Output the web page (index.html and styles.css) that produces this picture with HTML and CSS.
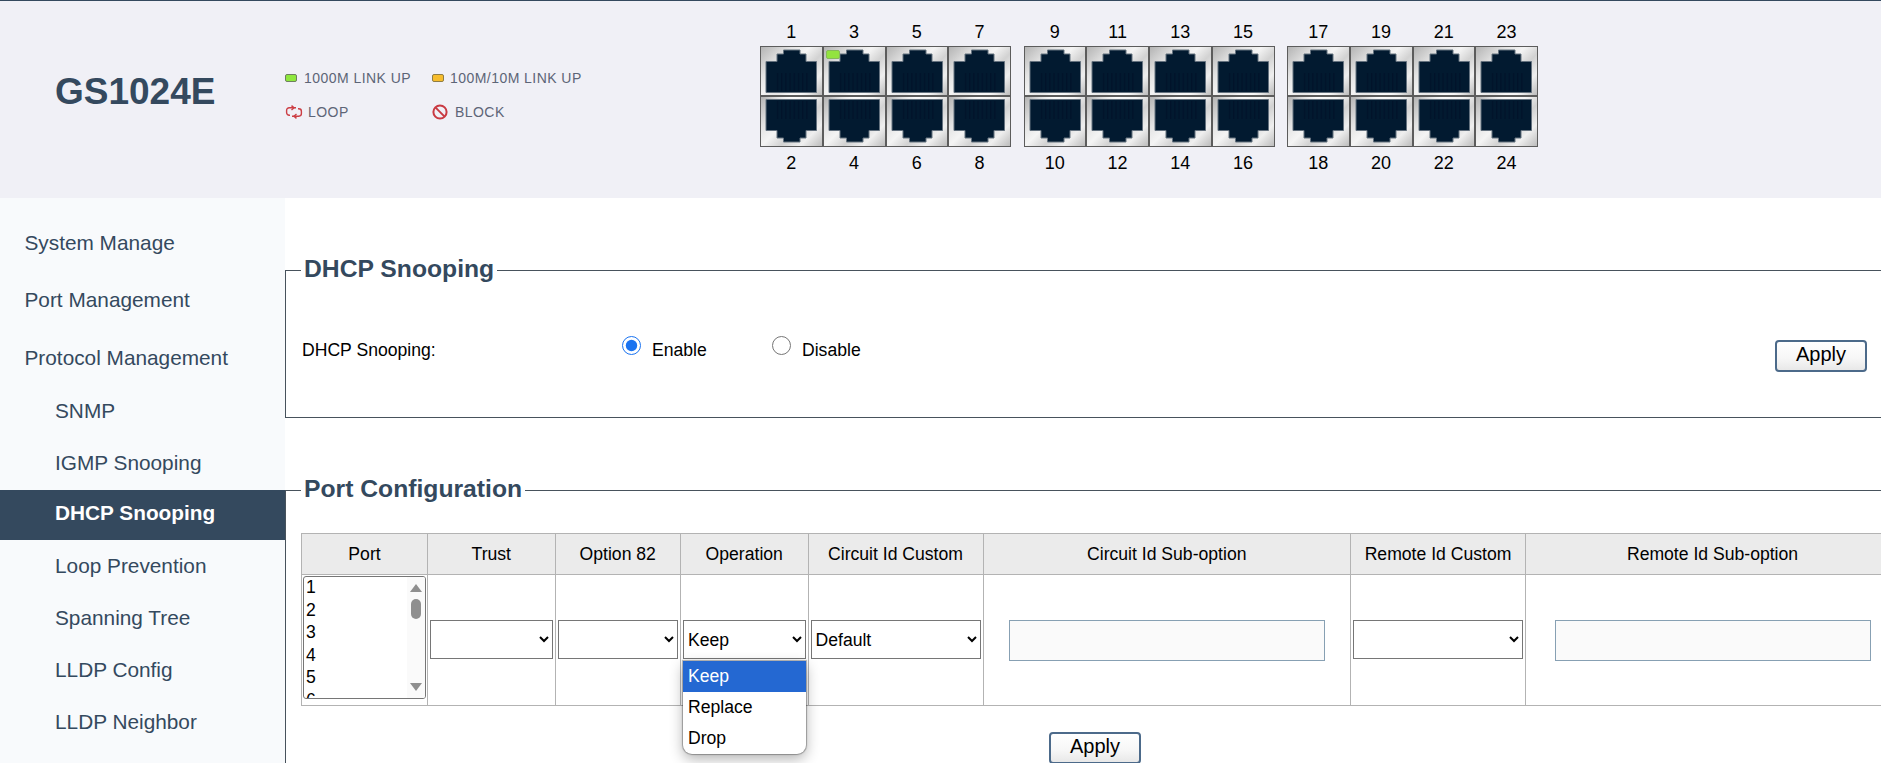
FILE: index.html
```html
<!DOCTYPE html>
<html lang="en">
<head>
    <meta charset="UTF-8">
    <meta name="viewport" content="width=device-width, initial-scale=1.0">
    <title>GS1024E - DHCP Snooping</title>
    <link rel="stylesheet" href="styles.css">
</head>
<body>
    <!-- shared port shape, flipped for the bottom row -->
    <svg class="defs" aria-hidden="true">
        <defs>
            <pattern id="pins" width="4.2" height="50" patternUnits="userSpaceOnUse">
                <rect x="0" y="0" width="1.4" height="50" fill="#01132a"/>
            </pattern>
            <symbol id="rj45" viewBox="0 0 63 50">
                <path d="M23.5 4H40V8H46V15.5H56.5V46.5H6V15.5H17V8H23.5Z" fill="#021a30" stroke="#65727f" stroke-width="1"/>
                <rect x="15" y="27" width="33" height="18" fill="url(#pins)"/>
            </symbol>
        </defs>
    </svg>

    <header class="topbar">
        <h1 class="model">GS1024E</h1>
        <div class="legend-box">
            <div class="legend-item"><span class="led led-green"></span>1000M LINK UP</div>
            <div class="legend-item legend-up"><span class="led led-amber"></span>100M/10M LINK UP</div>
            <div class="legend-item">
                <svg class="legend-icon" viewBox="0 0 18 14" fill="none" stroke="#cc3f45" stroke-width="1.4">
                    <path d="M11 2.8H4.2A2.6 2.6 0 0 0 1.6 5.4V7.6A2.6 2.6 0 0 0 4.2 10.2H5"/>
                    <path d="M7 11.2H13.8A2.6 2.6 0 0 0 16.4 8.6V6.4A2.6 2.6 0 0 0 13.8 3.8H13"/>
                    <path d="M6.5 0.6L9 2.8L6.5 5"/>
                    <path d="M11.5 9L9 11.2L11.5 13.4"/>
                </svg>LOOP
            </div>
            <div class="legend-item">
                <svg class="legend-icon icon-block" viewBox="0 0 16 16" fill="none" stroke="#c93a42" stroke-width="2">
                    <circle cx="8" cy="8" r="6.6"/>
                    <path d="M3.4 3.4L12.6 12.6"/>
                </svg>BLOCK
            </div>
        </div>

        <div class="ports">
            <div class="port-group">
                <span class="port-no">1</span><span class="port-no">3</span><span class="port-no">5</span><span class="port-no">7</span>
                <div class="port"><svg><use href="#rj45"/></svg></div>
                <div class="port"><span class="port-led"></span><svg><use href="#rj45"/></svg></div>
                <div class="port"><svg><use href="#rj45"/></svg></div>
                <div class="port"><svg><use href="#rj45"/></svg></div>
                <div class="port port-low"><svg><use href="#rj45"/></svg></div>
                <div class="port port-low"><svg><use href="#rj45"/></svg></div>
                <div class="port port-low"><svg><use href="#rj45"/></svg></div>
                <div class="port port-low"><svg><use href="#rj45"/></svg></div>
                <span class="port-no">2</span><span class="port-no">4</span><span class="port-no">6</span><span class="port-no">8</span>
            </div>
            <div class="port-group">
                <span class="port-no">9</span><span class="port-no">11</span><span class="port-no">13</span><span class="port-no">15</span>
                <div class="port"><svg><use href="#rj45"/></svg></div>
                <div class="port"><svg><use href="#rj45"/></svg></div>
                <div class="port"><svg><use href="#rj45"/></svg></div>
                <div class="port"><svg><use href="#rj45"/></svg></div>
                <div class="port port-low"><svg><use href="#rj45"/></svg></div>
                <div class="port port-low"><svg><use href="#rj45"/></svg></div>
                <div class="port port-low"><svg><use href="#rj45"/></svg></div>
                <div class="port port-low"><svg><use href="#rj45"/></svg></div>
                <span class="port-no">10</span><span class="port-no">12</span><span class="port-no">14</span><span class="port-no">16</span>
            </div>
            <div class="port-group">
                <span class="port-no">17</span><span class="port-no">19</span><span class="port-no">21</span><span class="port-no">23</span>
                <div class="port"><svg><use href="#rj45"/></svg></div>
                <div class="port"><svg><use href="#rj45"/></svg></div>
                <div class="port"><svg><use href="#rj45"/></svg></div>
                <div class="port"><svg><use href="#rj45"/></svg></div>
                <div class="port port-low"><svg><use href="#rj45"/></svg></div>
                <div class="port port-low"><svg><use href="#rj45"/></svg></div>
                <div class="port port-low"><svg><use href="#rj45"/></svg></div>
                <div class="port port-low"><svg><use href="#rj45"/></svg></div>
                <span class="port-no">18</span><span class="port-no">20</span><span class="port-no">22</span><span class="port-no">24</span>
            </div>
        </div>
    </header>

    <div class="content">
        <nav class="sidebar">
            <a class="nav-item">System Manage</a>
            <a class="nav-item">Port Management</a>
            <a class="nav-item">Protocol Management</a>
            <div class="sub-nav">
                <a class="sub-item">SNMP</a>
                <a class="sub-item">IGMP Snooping</a>
                <a class="sub-item active">DHCP Snooping</a>
                <a class="sub-item">Loop Prevention</a>
                <a class="sub-item">Spanning Tree</a>
                <a class="sub-item">LLDP Config</a>
                <a class="sub-item">LLDP Neighbor</a>
            </div>
        </nav>

        <main class="main">
            <fieldset class="panel">
                <legend>DHCP Snooping</legend>
                <div class="state-row">
                    <span class="state-label">DHCP Snooping:</span>
                    <label class="radio radio-enable"><input type="radio" name="snooping" checked>Enable</label>
                    <label class="radio"><input type="radio" name="snooping">Disable</label>
                    <button class="btn btn-state" type="button">Apply</button>
                </div>
            </fieldset>

            <fieldset class="panel panel-ports">
                <legend>Port Configuration</legend>
                <table class="port-table">
                    <thead>
                        <tr>
                            <th class="col-port">Port</th>
                            <th class="col-trust">Trust</th>
                            <th class="col-option">Option 82</th>
                            <th class="col-operation">Operation</th>
                            <th class="col-custom">Circuit Id Custom</th>
                            <th class="col-sub">Circuit Id Sub-option</th>
                            <th class="col-custom">Remote Id Custom</th>
                            <th class="col-remote">Remote Id Sub-option</th>
                        </tr>
                    </thead>
                    <tbody>
                        <tr>
                            <td class="port-cell">
                                <div class="port-list">
                                    <div>1</div><div>2</div><div>3</div><div>4</div><div>5</div><div>6</div>
                                    <div class="list-bar">
                                        <span class="arrow-up"></span>
                                        <span class="list-thumb"></span>
                                        <span class="arrow-down"></span>
                                    </div>
                                </div>
                            </td>
                            <td><select><option></option></select></td>
                            <td><select><option></option></select></td>
                            <td>
                                <div class="select-wrap">
                                    <select><option>Keep</option></select>
                                    <ul class="dropdown">
                                        <li class="selected">Keep</li>
                                        <li>Replace</li>
                                        <li>Drop</li>
                                    </ul>
                                </div>
                            </td>
                            <td><select><option>Default</option></select></td>
                            <td><input class="text-field" type="text"></td>
                            <td><select><option></option></select></td>
                            <td><input class="text-field" type="text"></td>
                        </tr>
                    </tbody>
                </table>
                <button class="btn btn-table" type="button">Apply</button>
            </fieldset>
        </main>
    </div>
</body>
</html>
```

FILE: styles.css
```css
html, body {
    margin: 0;
    padding: 0;
    height: 100%;
    overflow: hidden;
}
body {
    font-family: "Liberation Sans", Arial, sans-serif;
    font-size: 17.6px;
    color: #000;
    background: #fff;
}
.defs {
    display: block;
    width: 0;
    height: 0;
}

/* top bar */
.topbar {
    display: flex;
    height: 197px;
    background: #f0f0f6;
    border-top: 1px solid #34495e;
}
.model {
    width: 230px;
    margin: 0;
    padding-left: 55px;
    flex: none;
    font-size: 37px;
    line-height: 42px;
    padding-top: 70px;
    color: #34495e;
}
.legend-box {
    width: 475px;
    flex: none;
    display: grid;
    grid-template-columns: 147px auto;
    grid-auto-rows: 34px;
    align-content: start;
    padding-top: 60px;
    font-size: 14px;
    letter-spacing: 0.45px;
    color: #5d6577;
}
.legend-item {
    display: flex;
    align-items: center;
}
.legend-up {
    padding-bottom: 1px;
    box-sizing: border-box;
}
.led {
    width: 12px;
    height: 8px;
    margin-right: 7px;
    border-radius: 2px;
    box-sizing: border-box;
    border: 1px solid #6f7f60;
}
.led-green {
    background: #8fe83e;
}
.led-amber {
    background: #f7bd2d;
    border-color: #8f7d45;
    margin-right: 6px;
}
.legend-icon {
    width: 18px;
    height: 14px;
    margin-right: 5px;
}
.icon-block {
    width: 16px;
    height: 16px;
    margin-right: 7px;
}
.ports {
    display: flex;
    gap: 12.5px;
    padding-top: 16px;
}
.port-group {
    display: grid;
    grid-template-columns: repeat(4, 62.75px);
    grid-template-rows: 29px 50px 51px 30px;
    align-self: start;
}
.port-no {
    align-self: end;
    text-align: center;
    font-size: 18px;
    line-height: 28px;
}
.port {
    position: relative;
    box-sizing: border-box;
    border: 1px solid #5c5c5c;
    background:
        radial-gradient(ellipse 45% 10% at 50% 100%, #ffffff, rgba(255, 255, 255, 0)),
        linear-gradient(135deg, #b4b4b4, #e4e4e4 28%, #f4f4f4 45%, #d2d2d2 62%, #efefef 80%, #bcbcbc);
}
.port svg {
    display: block;
    position: absolute;
    left: -1px;
    top: -1px;
    width: 63px;
    height: 50px;
}
.port-low {
    background:
        radial-gradient(ellipse 45% 10% at 50% 0, #ffffff, rgba(255, 255, 255, 0)),
        linear-gradient(135deg, #b4b4b4, #e4e4e4 28%, #f4f4f4 45%, #d2d2d2 62%, #efefef 80%, #bcbcbc);
}
.port-low svg {
    transform: scaleY(-1);
}
.port-led {
    position: absolute;
    z-index: 1;
    left: 2px;
    top: 3px;
    width: 12px;
    height: 7px;
    border-radius: 2px;
    background: #93e33f;
    border: 1px solid #86b95a;
}

/* page below the top bar */
.content {
    display: flex;
    height: 565px;
}
.sidebar {
    width: 285px;
    flex: none;
    padding: 16px 0 0;
    box-sizing: border-box;
    background: #f8fafc;
    color: #34495e;
    font-size: 20.8px;
}
.nav-item {
    display: flex;
    align-items: center;
    height: 57.5px;
    padding-left: 24.5px;
}
.sub-nav {
    margin-top: -1.5px;
}
.sub-item {
    display: flex;
    align-items: center;
    height: 52px;
    padding-left: 55px;
}
.sub-item.active {
    box-sizing: border-box;
    height: 50px;
    margin-top: 1px;
    padding-bottom: 4px;
    background: #34495e;
    color: #fff;
    font-weight: bold;
}
.main {
    width: 1640px;
    flex: none;
}
.panel {
    margin: 57px 0 0;
    padding: 0 0 0 15px;
    min-width: 0;
    border: 1px solid #47525c;
    box-sizing: border-box;
}
.panel legend {
    padding: 0 3px 2px;
    font-size: 24.7px;
    line-height: 28px;
    font-weight: bold;
    color: #34495e;
}
.state-row {
    display: flex;
    align-items: center;
    width: 1565px;
    height: 130px;
    padding: 0 0 2px 1px;
}
.state-label {
    width: 320px;
    flex: none;
}
.radio {
    display: flex;
    align-items: center;
}
.radio input {
    width: 19px;
    height: 19px;
    margin: -10px 11px 0 0;
    accent-color: #1a73f0;
}
.radio-enable {
    width: 150px;
}
.btn {
    width: 92px;
    height: 32px;
    padding: 0 0 4px;
    box-sizing: border-box;
    border: 2px solid #4c6a8a;
    border-radius: 4px;
    background: linear-gradient(#ffffff, #f6f6f6 60%, #e8e8e8);
    font-family: "Liberation Sans", Arial, sans-serif;
    font-size: 20px;
    color: #000;
}
.btn-state {
    margin-left: auto;
    margin-top: 12px;
}
.btn-table {
    display: block;
    margin: 26px 0 30px 748px;
}

/* port table */
.port-table {
    table-layout: fixed;
    width: 1598px;
    margin-top: 28px;
    border-collapse: collapse;
}
.port-table th,
.port-table td {
    box-sizing: border-box;
    border: 1px solid #b3b3b3;
    padding: 0;
    text-align: center;
}
.port-table th {
    height: 41px;
    font-weight: normal;
    background: #ebebeb;
}
.port-table td {
    height: 131px;
}
.port-table .port-cell {
    vertical-align: top;
    padding-top: 1px;
}
.col-port { width: 126px; }
.col-trust { width: 127.5px; }
.col-option { width: 125.5px; }
.col-operation { width: 127.5px; }
.col-custom { width: 175px; }
.col-sub { width: 367.5px; }
.col-remote { width: 374px; }
select {
    display: block;
    width: calc(100% - 4px);
    height: 39px;
    margin: -1px auto 0;
    font-family: "Liberation Sans", Arial, sans-serif;
    font-size: 17.6px;
    color: #000;
    background: #fff;
}
.text-field {
    display: inline-block;
    vertical-align: middle;
    width: 316px;
    height: 41px;
    padding: 0;
    box-sizing: border-box;
    border: 1px solid #87a0b3;
    background: #fafafa;
}
.port-list {
    position: relative;
    height: 123px;
    margin: 0 1px;
    padding-left: 2px;
    overflow: hidden;
    box-sizing: border-box;
    border: 1px solid #767676;
    border-radius: 3px;
    text-align: left;
    line-height: 22.5px;
}
.port-list > div:first-child {
    margin-top: -1px;
}
.list-bar {
    position: absolute;
    top: 0;
    right: 0;
    bottom: 0;
    width: 18px;
    background: #fafafa;
}
.list-thumb {
    position: absolute;
    top: 22px;
    left: 4px;
    width: 10px;
    height: 20px;
    border-radius: 5px;
    background: #8f8f8f;
}
.arrow-up,
.arrow-down {
    position: absolute;
    left: 3px;
    width: 0;
    height: 0;
    border-left: 6px solid transparent;
    border-right: 6px solid transparent;
}
.arrow-up {
    top: 7px;
    border-bottom: 8px solid #8f8f8f;
}
.arrow-down {
    bottom: 7px;
    border-top: 8px solid #8f8f8f;
}
.select-wrap {
    position: relative;
}
.dropdown {
    position: absolute;
    z-index: 5;
    left: 2px;
    right: 2px;
    top: 41px;
    margin: 0;
    padding: 0;
    overflow: hidden;
    list-style: none;
    text-align: left;
    background: #fff;
    border-radius: 0 0 9px 9px;
    box-shadow: 0 0 1px 1px rgba(0, 0, 0, 0.3), 0 5px 14px rgba(0, 0, 0, 0.3);
}
.dropdown li {
    height: 31px;
    line-height: 31px;
    padding-left: 5px;
}
.dropdown .selected {
    background: #2468d2;
    color: #fff;
}
```
